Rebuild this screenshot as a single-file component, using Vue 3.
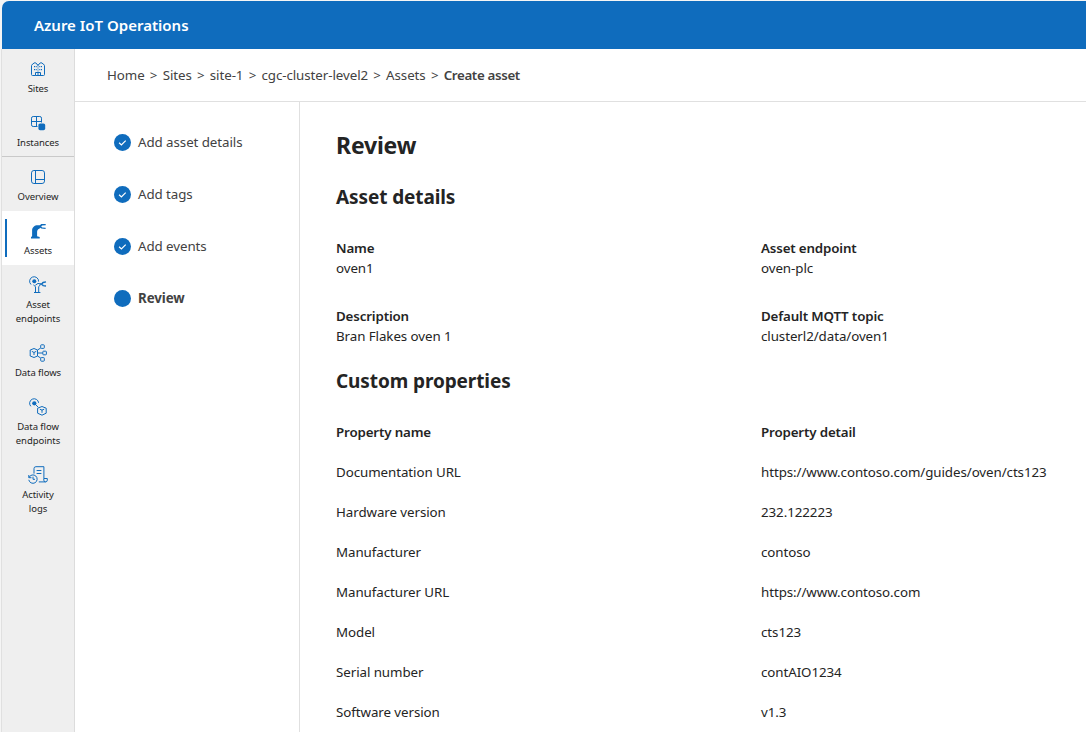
<script setup>
const nav = [
  { id: 'sites', lines: ['Sites'] },
  { id: 'instances', lines: ['Instances'], divider: true },
  { id: 'overview', lines: ['Overview'] },
  { id: 'assets', lines: ['Assets'], active: true },
  { id: 'asset-endpoints', lines: ['Asset', 'endpoints'] },
  { id: 'data-flows', lines: ['Data flows'] },
  { id: 'data-flow-endpoints', lines: ['Data flow', 'endpoints'] },
  { id: 'activity-logs', lines: ['Activity', 'logs'] }
]
const crumbs = ['Home', 'Sites', 'site-1', 'cgc-cluster-level2', 'Assets']
const steps = ['Add asset details', 'Add tags', 'Add events']
const details = [
  ['Name', 'oven1'],
  ['Asset endpoint', 'oven-plc'],
  ['Description', 'Bran Flakes oven 1'],
  ['Default MQTT topic', 'clusterl2/data/oven1']
]
const properties = [
  ['Documentation URL', 'https://www.contoso.com/guides/oven/cts123'],
  ['Hardware version', '232.122223'],
  ['Manufacturer', 'contoso'],
  ['Manufacturer URL', 'https://www.contoso.com'],
  ['Model', 'cts123'],
  ['Serial number', 'contAIO1234'],
  ['Software version', 'v1.3']
]
</script>

<template>
  <div class="app">
    <header class="topbar"><span class="brand">Azure IoT Operations</span></header>
    <div class="body">
      <nav class="sidebar">
        <div v-for="n in nav" :key="n.id" class="nav-item" :class="{ active: n.active, divider: n.divider }">
          <svg class="nav-icon" viewBox="0 0 18 18" width="18" height="18">
            <g v-if="n.id === 'sites'">
              <path d="M6.5 15.5H3.5a1 1 0 0 1-1-1V5.6L3.6 4 6 2.6 8 4l1 1.6L10 4l2-1.4L14.4 4l1.1 1.6v8.9a1 1 0 0 1-1 1h-8v-3h5v3M9 12.5v3" />
              <path d="M9 5.5V12" class="soft" />
              <path d="M5.5 6v1.2M5.5 9v1.2M7.2 6v1.2M7.2 9v1.2M10.8 6v1.2M10.8 9v1.2M12.5 6v1.2M12.5 9v1.2" />
            </g>
            <g v-else-if="n.id === 'instances'">
              <path d="M8.5 12.5H4.2a1.7 1.7 0 0 1-1.7-1.7V4.2a1.7 1.7 0 0 1 1.7-1.7h6.6a1.7 1.7 0 0 1 1.7 1.7v4.3M7.5 2.5v10M2.5 7.5h10" />
              <rect x="9.4" y="9.4" width="6.8" height="6.8" rx="1.7" class="solid" />
            </g>
            <g v-else-if="n.id === 'overview'">
              <rect x="2.5" y="2.5" width="13" height="13" rx="2.4" />
              <path d="M6.5 2.5v13M6.5 11.5h9" />
            </g>
            <g v-else-if="n.id === 'assets'">
              <path class="solid" d="M2 16.4V15l1.1-.8V8.6C3.1 5.2 5.6 3.3 8.6 3.3h2.2l1.5-1.4 4.4.2v1.1l-3.6.3-.9 1.1 1 .9 3.4.2v1.2l-4.2-.3-1.3-.8-.7.9c-2 .5-2.3 2-2.3 3.8v3.7l2.6.8v1.4z" />
            </g>
            <g v-else-if="n.id === 'asset-endpoints'">
              <path d="M2 8.5A4.5 4.5 0 1 1 9.6 5.6M4.4 8.9l2.1 1.8v5.3M9.7 16v-5.2l1.6-2M5 16.5h6.4M6.3 9.3 9 7.4l2.4.6" />
              <path d="M10.6 8h2.2l1.2-1.5 3-.6M12.8 8.2l1.3 1.4 2.9.4" class="heavy" />
              <circle cx="5.3" cy="5.2" r="2" class="solid" />
            </g>
            <g v-else-if="n.id === 'data-flows'">
              <path d="M5 4.5 8.5 6v6L5 13.5 1.2 12V6zM2.8 7.3 5 8.5l2.3-1.2M5 8.5V11M8.5 9h5M8.5 6l3.2-2M8.5 12l3.2 2" />
              <rect x="11.7" y=".8" width="3.6" height="3.6" rx=".7" />
              <rect x="13.8" y="7.2" width="3.6" height="3.6" rx=".7" />
              <rect x="11.7" y="13.6" width="3.6" height="3.6" rx=".7" />
            </g>
            <g v-else-if="n.id === 'data-flow-endpoints'">
              <path d="M1.8 8.3A4.5 4.5 0 1 1 9.6 4.8M6 6l3.2 3.2" />
              <circle cx="5.3" cy="5.3" r="2.1" class="solid" />
              <path d="M13 8.5 17.2 10.2v5L13 17.2l-4.4-2v-5zM10.8 11.2l2.2.9 2.2-.9M13 12v2.8" />
            </g>
            <g v-else>
              <path d="M5 7.6V2.6A1.9 1.9 0 0 1 6.9.7h8v11.8h3.4v1.6a1.8 1.8 0 0 1-1.8 1.8H9.8M16.6 15.9a1.8 1.8 0 0 1-1.8-1.8v-1.6M7.6 4.5h4.8M7.6 7.5h4.8" />
              <path d="M-.2 9v2.7h2.7M.1 11.4a4.2 4.2 0 1 1-.3 2.4M4 10.7v2.6h2" />
            </g>
          </svg>
          <span v-for="l in n.lines" :key="l" class="nav-label">{{ l }}</span>
        </div>
      </nav>
      <main class="main">
        <div class="crumbs">
          <template v-for="c in crumbs" :key="c"><span>{{ c }}</span><span class="sep">&gt;</span></template>
          <strong>Create asset</strong>
        </div>
        <div class="wizard">
          <aside class="steps">
            <div v-for="s in steps" :key="s" class="step">
              <svg viewBox="0 0 17 17" width="17" height="17"><circle cx="8.5" cy="8.5" r="8.5" fill="#0f6cbd" /><path d="M5.1 8.8l2.3 2.2 4.3-4.3" fill="none" stroke="#fff" stroke-width="1.2" /></svg>
              <span>{{ s }}</span>
            </div>
            <div class="step current">
              <svg viewBox="0 0 17 17" width="17" height="17"><circle cx="8.5" cy="8.5" r="8.5" fill="#0f6cbd" /></svg>
              <span>Review</span>
            </div>
          </aside>
          <section class="content">
            <h1>Review</h1>
            <h2>Asset details</h2>
            <div class="details">
              <div v-for="d in details" :key="d[0]">
                <div class="label">{{ d[0] }}</div>
                <div>{{ d[1] }}</div>
              </div>
            </div>
            <h2 class="second">Custom properties</h2>
            <div class="table">
              <div class="row label"><span>Property name</span><span>Property detail</span></div>
              <div v-for="p in properties" :key="p[0]" class="row"><span>{{ p[0] }}</span><span>{{ p[1] }}</span></div>
            </div>
          </section>
        </div>
      </main>
    </div>
  </div>
</template>

<style>
body { background: #fff; overflow: hidden; }
</style>

<style scoped>
.app { box-sizing: border-box; height: 732px; padding: 1px 0 0 1px; background: #f5f5f5; display: flex; flex-direction: column; overflow: hidden; font-family: "Noto Sans", "Open Sans", sans-serif; font-size: 13.33px; letter-spacing: -0.07px; line-height: 20px; color: #242424; }
.topbar { height: 48px; flex: none; margin-left: 1px; background: #0f6cbd; border-top-left-radius: 7px; display: flex; align-items: center; padding-left: 32px; color: #fff; font-weight: 600; font-size: 15px; letter-spacing: 0; }
.body { flex: 1; min-height: 0; display: flex; }
.sidebar { box-sizing: border-box; width: 74px; flex: none; background: #efefef; border-left: 1px solid #e0e0e0; border-right: 1px solid #dcdcdc; }
.nav-item { box-sizing: border-box; padding: 11px 0 7px; display: flex; flex-direction: column; align-items: center; position: relative; }
.nav-item.divider { padding-bottom: 6px; border-bottom: 1px solid #c9c9c9; }
.nav-item.active { background: #fff; }
.nav-item.active::before { content: ""; position: absolute; left: 3px; top: 8px; width: 2px; height: 38px; background: #0f6cbd; }
.nav-icon { overflow: visible; margin-bottom: 4px; fill: none; stroke: #0f6cbd; stroke-width: 1; stroke-linejoin: round; }
.nav-icon .solid { fill: #0f6cbd; stroke: none; }
.nav-icon .soft { opacity: .5; }
.nav-icon .heavy { stroke-width: 1.4; }
.nav-label { font-size: 9.5px; line-height: 14px; white-space: nowrap; }
.main { flex: 1; min-width: 0; background: #fff; display: flex; flex-direction: column; }
.crumbs { box-sizing: border-box; height: 53px; flex: none; border-bottom: 1px solid #e0e0e0; padding-left: 32px; display: flex; align-items: center; color: #424242; white-space: nowrap; }
.crumbs .sep { width: 18px; text-align: center; }
.crumbs strong { font-weight: 600; letter-spacing: -0.35px; }
.wizard { flex: 1; min-height: 0; display: flex; }
.steps { box-sizing: border-box; width: 225px; flex: none; border-right: 1px solid #e0e0e0; padding: 30px 0 0 38.5px; display: flex; flex-direction: column; gap: 32px; color: #424242; }
.step { display: flex; align-items: center; gap: 7.5px; height: 20px; white-space: nowrap; }
.current { font-weight: 700; }
.content { flex: 1; min-width: 0; padding: 27px 0 0 36px; }
h1 { margin: 0 0 22px; font-size: 23px; line-height: 32px; font-weight: 700; letter-spacing: -0.2px; }
h2 { margin: 0 0 27px; font-size: 19px; line-height: 28px; font-weight: 700; letter-spacing: -0.1px; }
.details { display: grid; grid-template-columns: 425px 1fr; row-gap: 28px; }
.label { font-weight: 600; letter-spacing: -0.15px; }
h2.second { margin: 21px 0 17px; }
.row { height: 40px; display: grid; grid-template-columns: 425px 1fr; align-items: center; white-space: nowrap; }
</style>
